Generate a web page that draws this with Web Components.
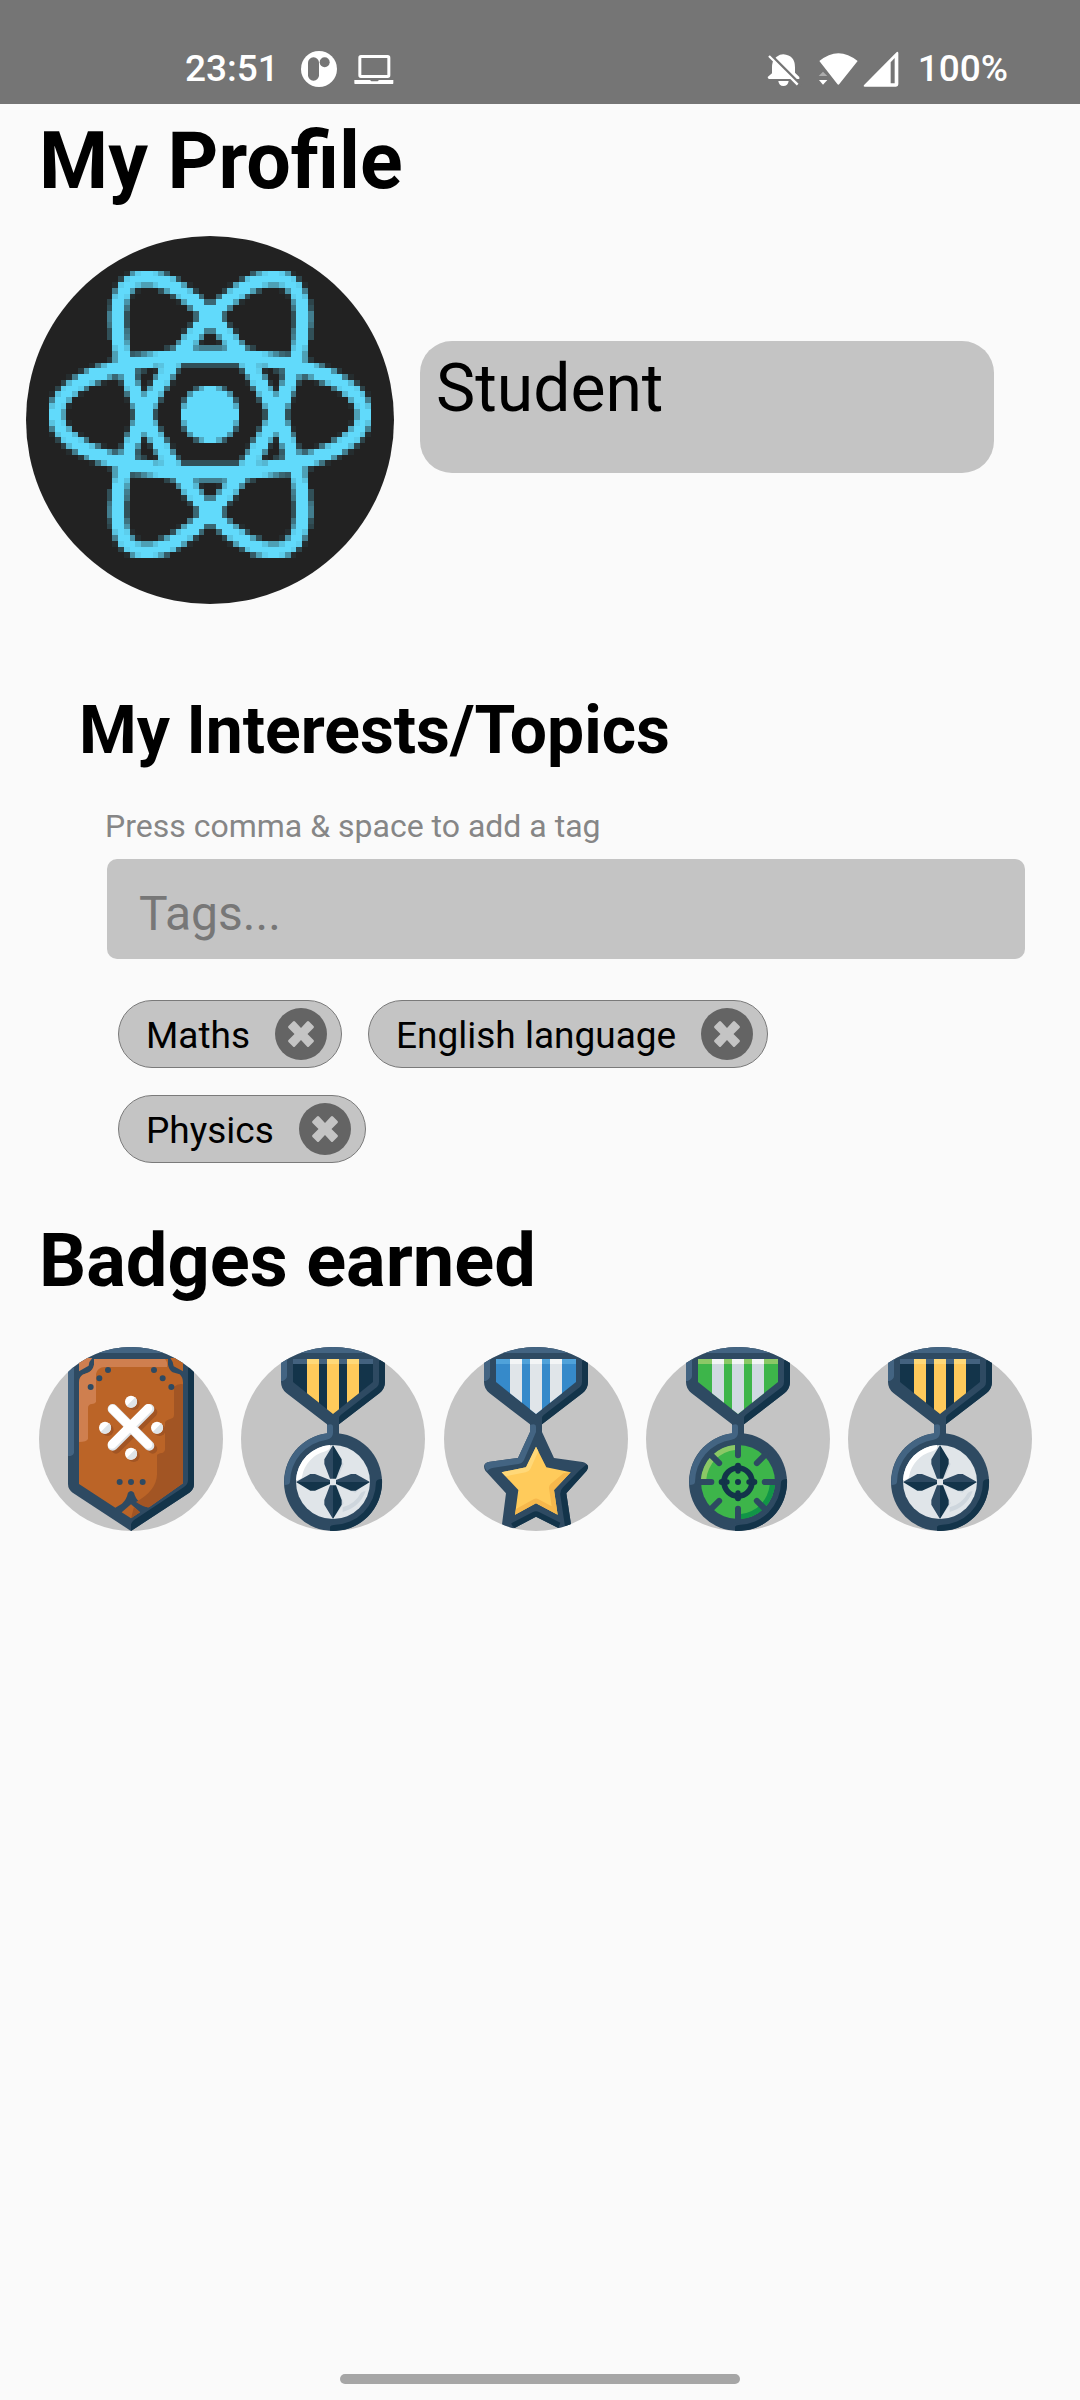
<!DOCTYPE html>
<html lang="en">
<head>
<meta charset="utf-8">
<meta name="viewport" content="width=device-width, initial-scale=1">
<title>My Profile</title>
<style>
  :root {
    --grey: #c4c4c4;
    --page: #fafafa;
    --muted: #868686;
  }

  body {
    margin: 0;
    background: var(--page);
    color: #000;
    font-family: Roboto, "Liberation Sans", sans-serif;
  }
</style>
</head>
<body>
<profile-screen></profile-screen>

<script>
class StatusBar extends HTMLElement {
  constructor() {
    super();
    this.attachShadow({ mode: "open" });
    this.shadowRoot.innerHTML = `
      <style>
        :host {
          display: flex;
          justify-content: space-between;
          align-items: center;
          box-sizing: border-box;
          height: 104px;
          padding: 34px 72px 0 185px;
          background: #757575;
          color: #fff;
          font-size: 37px;
          font-weight: 500;
          line-height: 44px;
        }

        .group {
          display: flex;
          align-items: center;
        }

        .left {
          gap: 16px;
        }

        .left span {
          padding-right: 5px;
        }

        .right span {
          margin-left: 18px;
        }

        .bell {
          margin-right: 10px;
        }

        svg {
          display: block;
          fill: #fff;
        }
      </style>
      <div class="group left">
        <span>23:51</span>
        <svg width="38" height="38" viewBox="420 60 114 114">
          <circle cx="477" cy="117" r="54"/>
          <rect x="444" y="82" width="33" height="70" rx="16" fill="#757575"/>
          <circle cx="494" cy="97" r="15" fill="#757575"/>
        </svg>
        <svg width="40" height="38" viewBox="581 60 120 114">
          <path fill-rule="evenodd" d="M602 75H682Q690 75 690 83V136Q690 144 682 144H602Q594 144 594 136V83Q594 75 602 75ZM603 84V135H681V84Z"/>
          <path d="M582 150H629L633 154H652L656 150H699V160Q699 162 697 162H584Q582 162 582 160Z"/>
        </svg>
      </div>
      <div class="group right">
        <svg class="bell" width="38" height="38" viewBox="78 60 114 114">
          <path d="M113 80Q123 73 133 73Q168 76 168 112V128L181 141V147H91Q86 147 86 141L99 130V112Q99 95 106 86Z"/>
          <path d="M118 153H149Q147 168 133 168Q120 168 118 153Z"/>
          <path d="M93 73L186 166" stroke="#757575" stroke-width="9" fill="none"/>
          <path d="M90 78L176 164" stroke="#fff" stroke-width="7" fill="none"/>
        </svg>
        <svg width="50" height="38" viewBox="222 60 150 114">
          <path d="M241 93Q298 46 356 93L301 162Q298 166 295 162Z"/>
          <path d="M252 125L265 138H239Z" opacity=".4"/>
          <path d="M240 150H265L252 164Z"/>
        </svg>
        <svg width="37" height="38" viewBox="370 60 111 114">
          <path fill-rule="evenodd" d="M469 68Q476 62 476 70V163Q476 170 469 170H376Q369 170 374 164ZM465 84L453 97V160H465Z"/>
        </svg>
        <span>100%</span>
      </div>
    `;
  }
}
customElements.define("status-bar", StatusBar);

class UserAvatar extends HTMLElement {
  constructor() {
    super();
    this.attachShadow({ mode: "open" });
    this.shadowRoot.innerHTML = `
      <style>
        :host {
          display: block;
          flex: none;
          width: 368px;
          height: 368px;
          border-radius: 50%;
          overflow: hidden;
          background: #222;
        }

        svg {
          display: block;
          width: 100%;
          height: 100%;
          fill: #61dafb;
        }
      </style>
      <svg viewBox="0 0 64 64" shape-rendering="crispEdges" role="img" aria-label="Profile picture">${this.cells()}</svg>
    `;
  }

  // true when the point lies on the nucleus or on one of the three orbits
  hit(x, y) {
    if (Math.hypot(x, y) < 5) return true;
    const rx = 26.7;
    const ry = 10.1;
    return [0, 60, 120].some((deg) => {
      const a = (deg * Math.PI) / 180;
      const u = x * Math.cos(a) + y * Math.sin(a);
      const v = y * Math.cos(a) - x * Math.sin(a);
      const f = (u / rx) ** 2 + (v / ry) ** 2 - 1;
      const slope = 2 * Math.hypot(u / rx ** 2, v / ry ** 2);
      return Math.abs(f) < 1.35 * slope;
    });
  }

  // the atom as a 64x64 grid, each cell shaded by its coverage
  cells() {
    const step = 4;
    let out = "";
    for (let row = 0; row < 64; row++) {
      for (let col = 0; col < 64; col++) {
        let n = 0;
        for (let i = 0; i < step * step; i++) {
          const x = col + ((i % step) + 0.5) / step - 32;
          const y = row + (Math.floor(i / step) + 0.5) / step - 31;
          if (this.hit(x, y)) n++;
        }
        if (n) out += `<rect x="${col}" y="${row}" width="1" height="1" opacity="${n / (step * step)}"/>`;
      }
    }
    return out;
  }
}
customElements.define("user-avatar", UserAvatar);

class RoleBox extends HTMLElement {
  constructor() {
    super();
    this.attachShadow({ mode: "open" });
    this.shadowRoot.innerHTML = `
      <style>
        :host {
          display: block;
          flex: 1;
          box-sizing: border-box;
          height: 132px;
          padding: 9px 16px;
          border-radius: 32px;
          background: var(--grey);
          font-size: 66px;
          line-height: 78px;
        }
      </style>
      <slot></slot>
    `;
  }
}
customElements.define("role-box", RoleBox);

class TagChip extends HTMLElement {
  constructor() {
    super();
    this.attachShadow({ mode: "open" });
    this.shadowRoot.innerHTML = `
      <style>
        :host {
          display: flex;
          align-items: center;
          gap: 25px;
          box-sizing: border-box;
          height: 68px;
          padding: 0 14px 0 27px;
          border: 1px solid #7a7a7a;
          border-radius: 34px;
          background: var(--grey);
          font-size: 37px;
          line-height: 44px;
        }

        span {
          padding-top: 4px;
        }

        button {
          width: 52px;
          height: 52px;
          padding: 0;
          border: 0;
          border-radius: 50%;
          background: #646464;
          cursor: pointer;
        }

        svg {
          display: block;
          fill: var(--grey);
        }
      </style>
      <span><slot></slot></span>
      <button type="button" aria-label="Remove tag">
        <svg width="52" height="52" viewBox="0 0 52 52">
          <path d="M26 20L32 13.500Q33 12.500 34 13.500L38.500 18Q39.500 19 38.500 20L32.500 26L38.500 32Q39.500 33 38.500 34L34 38.500Q33 39.500 32 38.500L26 32L20 38.500Q19 39.500 18 38.500L13.500 34Q12.500 33 13.500 32L19.500 26L13.500 20Q12.500 19 13.500 18L18 13.500Q19 12.500 20 13.500Z"/>
        </svg>
      </button>
    `;
    this._button = this.shadowRoot.querySelector("button");
  }

  connectedCallback() {
    this._button.addEventListener("click", this._remove);
  }

  disconnectedCallback() {
    this._button.removeEventListener("click", this._remove);
  }

  _remove = () => {
    this.remove();
  };
}
customElements.define("tag-chip", TagChip);

class TagInput extends HTMLElement {
  constructor() {
    super();
    this.attachShadow({ mode: "open" });
    this.shadowRoot.innerHTML = `
      <style>
        :host {
          display: flex;
          flex-direction: column;
        }

        label {
          color: var(--muted);
          font-size: 32px;
          line-height: 38px;
          padding-bottom: 14px;
        }

        .field {
          padding-left: 2px;
        }

        input {
          display: block;
          box-sizing: border-box;
          width: 100%;
          height: 100px;
          padding: 8px 32px 0;
          border: 0;
          border-radius: 10px;
          background: var(--grey);
          color: #000;
          font-family: inherit;
          font-size: 48px;
        }

        input::placeholder {
          color: #777;
          opacity: 1;
        }

        .tags {
          display: flex;
          flex-wrap: wrap;
          gap: 27px 26px;
          padding: 41px 11px 0 13px;
        }
      </style>
      <label for="tags">Press comma &amp; space to add a tag</label>
      <div class="field"><input id="tags" type="text" placeholder="Tags..."></div>
      <div class="tags"><slot></slot></div>
    `;
    this._input = this.shadowRoot.querySelector("input");
  }

  connectedCallback() {
    this._input.addEventListener("input", this._addTag);
  }

  disconnectedCallback() {
    this._input.removeEventListener("input", this._addTag);
  }

  _addTag = () => {
    const value = this._input.value;
    if (!value.endsWith(", ")) return;
    const text = value.slice(0, -2).trim();
    if (text) {
      const chip = document.createElement("tag-chip");
      chip.textContent = text;
      this.append(chip);
    }
    this._input.value = "";
  };
}
customElements.define("tag-input", TagInput);

const NAVY = "#2e4a62";
const DARK = "#13344a";
const LIGHT = "#436482";

// hanging ribbon shared by all the medals
const ribbon = (cloth, clothTop, stripe, stripeTop) => `
  <path fill="${NAVY}" d="M153 51H465V156Q465 176 449 189L327 283V320H291V283L169 189Q153 176 153 156Z"/>
  <path fill="${LIGHT}" d="M180 51H438V69H180ZM153 69H171V138Q171 147 158 153H153Z"/>
  <path fill="${DARK}" d="M447 92Q456 82 465 92V156Q465 176 449 189L327 283V264Q327 258 333 254L441 171Q447 166 447 156Z"/>
  <path fill="${cloth}" d="M189 87H429V156L309 252L189 156Z"/>
  <path fill="${clothTop}" d="M189 87H429V102H189Z"/>
  <path fill="${stripe}" d="M231 87H267V218L231 190ZM291 87H327V238L309 252L291 238ZM351 87H387V190L351 218Z"/>
  <path fill="${stripeTop}" d="M231 87H267V102H231ZM291 87H327V102H291ZM351 87H387V102H351Z"/>`;

const ring = `
  <circle cx="309" cy="456" r="147" fill="${NAVY}"/>
  <path fill="${LIGHT}" d="M291 285Q309 279 309 291V309Q309 325 290 329A129 129 0 0 0 180 456Q180 465 163 465A147 147 0 0 1 291 310Z"/>
  <path fill="${DARK}" d="M456 447A147 147 0 0 1 300 603V590Q303 585 311 585A129 129 0 0 0 438 456Q440 447 456 447Z"/>`;

const crossMedal = `
  ${ribbon(DARK, "#43627f", "#ffca5b", "#ffd978")}${ring}
  <circle cx="309" cy="456" r="111" fill="#e0e5e9"/>
  <path fill="#fff" d="M198 450A111 111 0 0 1 300 345V354Q294 363 286 364A95 95 0 0 0 216 440Q215 448 198 450Z"/>
  <path fill="#ced6dd" d="M402 484H407A102 102 0 0 1 338 546V532A90 90 0 0 0 393 488ZM318 360L341 402L324 440L318 446ZM405 461L376 488L338 474L324 461ZM324 476L341 520L318 554Z"/>
  <path fill="${NAVY}" d="M309 345V446H300L283 402V388ZM309 567V466H300L283 510V524ZM198 456L241 432H255L300 450V456ZM420 456L377 432H363L318 450V456Z"/>
  <path fill="${DARK}" d="M309 345V446H318L335 402V388ZM309 567V466H318L335 510V524ZM198 456L241 482H255L300 462V456ZM420 456L377 482H363L318 462V456Z"/>`;

const starMedal = `
  ${ribbon("#368aca", "#4fa2da", "#e0e5e9", "#f3f5f6")}
  <g transform="translate(-6 0)">
    <path fill="${NAVY}" d="M297 285H333V306L369 384L455 396Q478 402 467 422L406 490L420 583Q402 599 382 594L315 560L251 594Q230 599 213 583L225 490L163 422Q152 402 172 396L261 384L297 306Z"/>
    <path fill="${LIGHT}" d="M297 285Q315 279 315 291V306L279 390Q274 400 262 402L188 413Q174 415 168 424Q152 402 172 396L261 384L297 306Z"/>
    <path fill="${DARK}" d="M467 403Q476 410 467 422L406 490L420 583Q410 592 402 590L388 496Q386 482 396 472L446 421ZM251 594Q243 590 241 580L306 546Q315 541 324 546L388 578L382 594L315 560Z"/>
    <path fill="#ffcb5b" d="M315 350L346 412L419 427L369 480L380 554L315 520L252 554L262 480L212 427L285 412Z"/>
    <path fill="#ffd878" d="M315 350L322 364L298 417Q294 425 284 427L224 439L212 427L285 412Z"/>
    <path fill="#f6b84c" d="M419 427L369 480L380 554L315 520L252 554L255 537L309 507Q315 504 321 507L362 529L354 474Q354 466 359 462L397 430Z"/>
  </g>`;

const spokes = [0, 45, 90, 135, 180, 225, 270, 315]
  .map((a) => `<path d="M309 340V376" transform="rotate(${a} 309 456)"/>`)
  .join("");

const bumps = [0, 90, 180, 270]
  .map((a) => `<g transform="rotate(${a} 309 456)"><circle cx="309" cy="407" r="9"/><circle cx="309" cy="423" r="8"/></g>`)
  .join("");

const targetMedal = `
  ${ribbon("#3db54a", "#8bc866", "#d0d9e1", "#f3f5f6")}${ring}
  <circle cx="309" cy="456" r="111" fill="#3db54a"/>
  <path fill="#8bc866" d="M198 447A111 111 0 0 1 300 345V360A96 96 0 0 0 214 447Z"/>
  <path fill="#119547" d="M420 465A111 111 0 0 1 318 567V552A96 96 0 0 0 404 465Z"/>
  <g stroke="${NAVY}" stroke-width="18" stroke-linecap="round">${spokes}</g>
  <circle cx="309" cy="456" r="42" fill="none" stroke="${DARK}" stroke-width="17"/>
  <g fill="${DARK}">${bumps}<circle cx="309" cy="456" r="9"/></g>`;

const shield = `
  <g transform="translate(6 0)">
    <path fill="${NAVY}" d="M114 51H492V462Q492 478 478 488L303 603L128 488Q114 478 114 462Z"/>
    <path fill="${LIGHT}" d="M180 51H432V69H180ZM114 90H132V368Q130 378 114 378Z"/>
    <path fill="${DARK}" d="M474 115Q483 105 492 115V462Q492 478 478 488L303 603V583Q305 575 312 570L462 471Q474 463 474 450Z"/>
    <path fill="#ce7e50" d="M147 92L160 84H187Q177 94 176 107L147 124Z"/>
    <path fill="#bb6427" d="M421 84H440L459 95V124L431 109Q429 94 421 84ZM192 87H414V104Q417 120 428 127L449 133Q459 142 459 158V460L357 532Q347 532 330 518Q315 504 312 488Q303 478 294 488Q290 508 276 521L256 533L147 462V158Q147 142 158 134L177 127Q190 118 192 104Z"/>
    <path fill="#cf7f4f" d="M192 87H405Q414 96 411 111H224Q202 112 198 132V216Q194 222 186 222Q174 223 174 234V327Q170 336 147 336V158Q147 142 158 134L177 127Q190 118 192 104Z"/>
    <path fill="#a25524" d="M459 163V460L357 532Q342 533 318 516Q380 482 381 433V374Q390 368 399 368Q405 366 405 358V276Q409 270 422 266Q432 264 432 254V170Q445 160 459 163Z"/>
    <path fill="${NAVY}" d="M225 120a9 9 0 1 0 18 0a9 9 0 1 0-18 0M199 145a9 9 0 1 0 18 0a9 9 0 1 0-18 0M173 171a9 9 0 1 0 18 0a9 9 0 1 0-18 0M363 120a9 9 0 1 0 18 0a9 9 0 1 0-18 0M389 145a9 9 0 1 0 18 0a9 9 0 1 0-18 0M415 171a9 9 0 1 0 18 0a9 9 0 1 0-18 0M260 456a9 9 0 1 0 18 0a9 9 0 1 0-18 0M294 456a9 9 0 1 0 18 0a9 9 0 1 0-18 0M329 456a9 9 0 1 0 18 0a9 9 0 1 0-18 0"/>
    <g fill="#a25524">
      <path d="M258 247L368 357M368 247L258 357" stroke="#a25524" stroke-width="28" stroke-linecap="round"/>
      <circle cx="311" cy="222" r="18"/><circle cx="233" cy="300" r="18"/>
      <circle cx="389" cy="300" r="18"/><circle cx="311" cy="378" r="18"/>
    </g>
    <path d="M248 237L358 347M358 237L248 347" stroke="#dfe4e8" stroke-width="30" stroke-linecap="round"/>
    <path d="M248 237L354 343M354 235L246 343" stroke="#fff" stroke-width="26" stroke-linecap="round"/>
    <g fill="#fff">
      <circle cx="303" cy="215" r="18"/><circle cx="225" cy="293" r="18"/>
      <circle cx="381" cy="293" r="18"/><circle cx="303" cy="371" r="18"/>
    </g>
    <path fill="#dfe4e8" d="M316 202A18 18 0 0 1 290 228ZM238 280A18 18 0 0 1 212 306ZM394 280A18 18 0 0 1 368 306ZM316 358A18 18 0 0 1 290 384Z"/>
    <path fill="#bb6427" d="M303 523L330 547L303 565L275 547Z"/>
    <path fill="#a25524" d="M312 531L330 547L303 565Z"/>
  </g>`;

const BADGES = {
  shield: shield,
  cross: crossMedal,
  star: starMedal,
  target: targetMedal,
};

class EarnedBadge extends HTMLElement {
  connectedCallback() {
    if (this.shadowRoot) return;
    const kind = this.getAttribute("kind");
    this.attachShadow({ mode: "open" });
    this.shadowRoot.innerHTML = `
      <style>
        :host {
          display: block;
          width: 184px;
          height: 184px;
          border-radius: 50%;
          overflow: hidden;
          background: var(--grey);
        }

        svg {
          display: block;
          width: 100%;
          height: 100%;
        }
      </style>
      <svg viewBox="33 51 552 552" role="img" aria-label="${kind} badge">${BADGES[kind]}</svg>
    `;
  }
}
customElements.define("earned-badge", EarnedBadge);

class ProfileScreen extends HTMLElement {
  constructor() {
    super();
    this.attachShadow({ mode: "open" });
    this.shadowRoot.innerHTML = `
      <style>
        :host {
          display: flex;
          flex-direction: column;
          min-height: 100vh;
        }

        h1, h2, h3 {
          margin: 0;
          font-weight: 700;
        }

        h1 {
          padding: 11px 39px 0;
          font-size: 79px;
          line-height: 92px;
        }

        .user {
          display: flex;
          align-items: center;
          gap: 26px;
          padding: 29px 86px 0 26px;
        }

        role-box {
          margin-bottom: 26px;
        }

        h3 {
          padding: 88px 79px 0;
          font-size: 66px;
          line-height: 78px;
        }

        tag-input {
          padding: 37px 55px 0 105px;
        }

        h2 {
          padding: 55px 39px 0;
          font-size: 74px;
          line-height: 86px;
        }

        .badges {
          display: flex;
          flex-wrap: wrap;
          justify-content: space-between;
          padding: 43px 48px 0 39px;
        }

        footer {
          display: flex;
          justify-content: center;
          margin-top: auto;
          padding: 16px;
        }

        .handle {
          width: 400px;
          height: 10px;
          border-radius: 5px;
          background: #a6a6a6;
        }
      </style>
      <status-bar></status-bar>
      <h1>My Profile</h1>
      <div class="user">
        <user-avatar></user-avatar>
        <role-box>Student</role-box>
      </div>
      <h3>My Interests/Topics</h3>
      <tag-input>
        <tag-chip>Maths</tag-chip>
        <tag-chip>English language</tag-chip>
        <tag-chip>Physics</tag-chip>
      </tag-input>
      <h2>Badges earned</h2>
      <div class="badges">
        <earned-badge kind="shield"></earned-badge>
        <earned-badge kind="cross"></earned-badge>
        <earned-badge kind="star"></earned-badge>
        <earned-badge kind="target"></earned-badge>
        <earned-badge kind="cross"></earned-badge>
      </div>
      <footer><div class="handle"></div></footer>
    `;
  }
}
customElements.define("profile-screen", ProfileScreen);
</script>
</body>
</html>
